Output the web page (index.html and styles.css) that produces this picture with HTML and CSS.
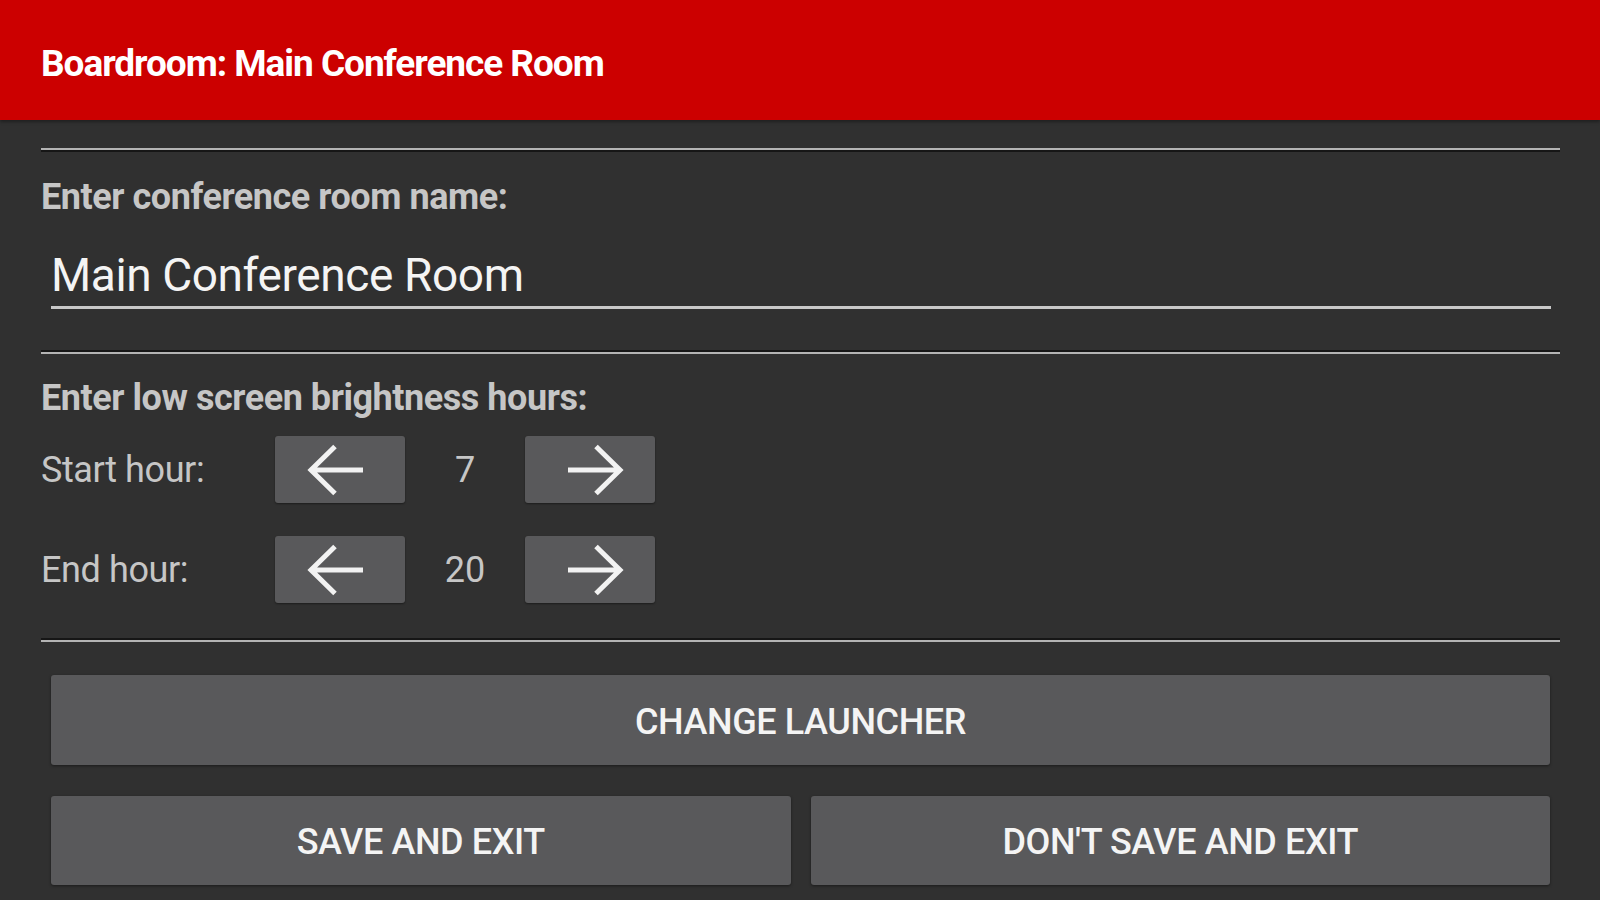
FILE: index.html
```html
<!DOCTYPE html>
<html>
<head>
<meta charset="utf-8">
<link rel="stylesheet" href="styles.css">
</head>
<body>
<header class="appbar"><span class="title">Boardroom: Main Conference Room</span></header>
<main class="content">
  <div class="divider divider-first"></div>
  <div class="label">Enter conference room name:</div>
  <div class="input"><span class="input-text">Main Conference Room</span></div>
  <div class="divider divider-second"></div>
  <div class="label label-hours">Enter low screen brightness hours:</div>
  <div class="hour-row hour-row-first">
    <span class="hour-label">Start hour:</span>
    <button class="arrow-btn arrow-left"><svg class="arrow" viewBox="0 0 58 52"><path d="M56 26H4M28 2.5L4 26L28 49.5"/></svg></button>
    <span class="hour-value">7</span>
    <button class="arrow-btn arrow-right"><svg class="arrow" viewBox="0 0 58 52"><path d="M2 26H54M30 2.5L54 26L30 49.5"/></svg></button>
  </div>
  <div class="hour-row">
    <span class="hour-label">End hour:</span>
    <button class="arrow-btn arrow-left"><svg class="arrow" viewBox="0 0 58 52"><path d="M56 26H4M28 2.5L4 26L28 49.5"/></svg></button>
    <span class="hour-value">20</span>
    <button class="arrow-btn arrow-right"><svg class="arrow" viewBox="0 0 58 52"><path d="M2 26H54M30 2.5L54 26L30 49.5"/></svg></button>
  </div>
  <div class="divider divider-third"></div>
  <button class="wide-btn">CHANGE LAUNCHER</button>
  <div class="btn-row">
    <button class="wide-btn half">SAVE AND EXIT</button>
    <button class="wide-btn half">DON'T SAVE AND EXIT</button>
  </div>
</main>
</body>
</html>
```
FILE: styles.css
```css
html, body {
  margin: 0;
  padding: 0;
  background: #303030;
  width: 1600px;
  height: 900px;
  overflow: hidden;
  font-family: Roboto, "Liberation Sans", sans-serif;
}
.appbar {
  height: 120px;
  box-sizing: border-box;
  background: #cc0000;
  display: flex;
  align-items: center;
  padding-left: 41px;
  padding-top: 7px;
  box-shadow: 0 2px 3px rgba(0,0,0,0.35);
  position: relative;
}
.title {
  color: #ffffff;
  font-weight: 700;
  font-size: 37px;
  letter-spacing: -1.05px;
}
.content {
  padding: 0 40px 0 41px;
  display: flex;
  flex-direction: column;
}
.divider {
  height: 2px;
  background: #b4b4b4;
}
.divider-first {
  margin-top: 28px;
  border-bottom: 2px solid #161616;
}
.divider-second {
  margin-top: 41px;
  border-top: 2px solid #161616;
}
.divider-third {
  margin-top: 35px;
  border-top: 2px solid #161616;
}
.label {
  color: #c6c6c6;
  font-weight: 700;
  font-size: 36px;
  letter-spacing: -0.45px;
  line-height: 40px;
  margin-top: 25px;
}
.input {
  margin: 30px 9px 0 10px;
  height: 56px;
  border-bottom: 3px solid #c8c8c8;
  padding-bottom: 3px;
  display: flex;
  align-items: center;
}
.input-text {
  color: #f4f4f4;
  font-size: 46px;
  letter-spacing: -0.4px;
}
.label-hours {
  margin-top: 24px;
}
.hour-row {
  display: flex;
  align-items: center;
  height: 67px;
  margin-top: 33px;
}
.hour-row-first {
  margin-top: 18px;
}
.hour-label {
  width: 234px;
  color: #c6c6c6;
  font-size: 36px;
  letter-spacing: -0.4px;
}
.arrow-btn {
  width: 130px;
  height: 67px;
  background: #59595b;
  border: none;
  border-radius: 3px;
  padding: 0;
  display: flex;
  align-items: center;
  justify-content: center;
  box-shadow: 0 1px 2px rgba(0,0,0,0.4);
}
.arrow-left {
  padding-right: 9px;
}
.arrow-right {
  padding-left: 9px;
}
.arrow {
  width: 58px;
  height: 52px;
  fill: none;
  stroke: #f2f2f2;
  stroke-width: 5;
}
.hour-value {
  width: 120px;
  text-align: center;
  color: #c6c6c6;
  font-size: 36px;
}
.wide-btn {
  height: 90px;
  margin: 33px 10px 0 10px;
  background: #59595b;
  border: none;
  border-radius: 3px;
  color: #f4f4f4;
  font-family: Roboto, "Liberation Sans", sans-serif;
  font-weight: 500;
  font-size: 36px;
  letter-spacing: -0.4px;
  padding-top: 4px;
  box-shadow: 0 1px 3px rgba(0,0,0,0.45);
}
.btn-row {
  display: flex;
  gap: 20px;
  margin: 31px 10px 0 10px;
}
.wide-btn.half {
  flex: 1;
  margin: 0;
  height: 89px;
}
```
